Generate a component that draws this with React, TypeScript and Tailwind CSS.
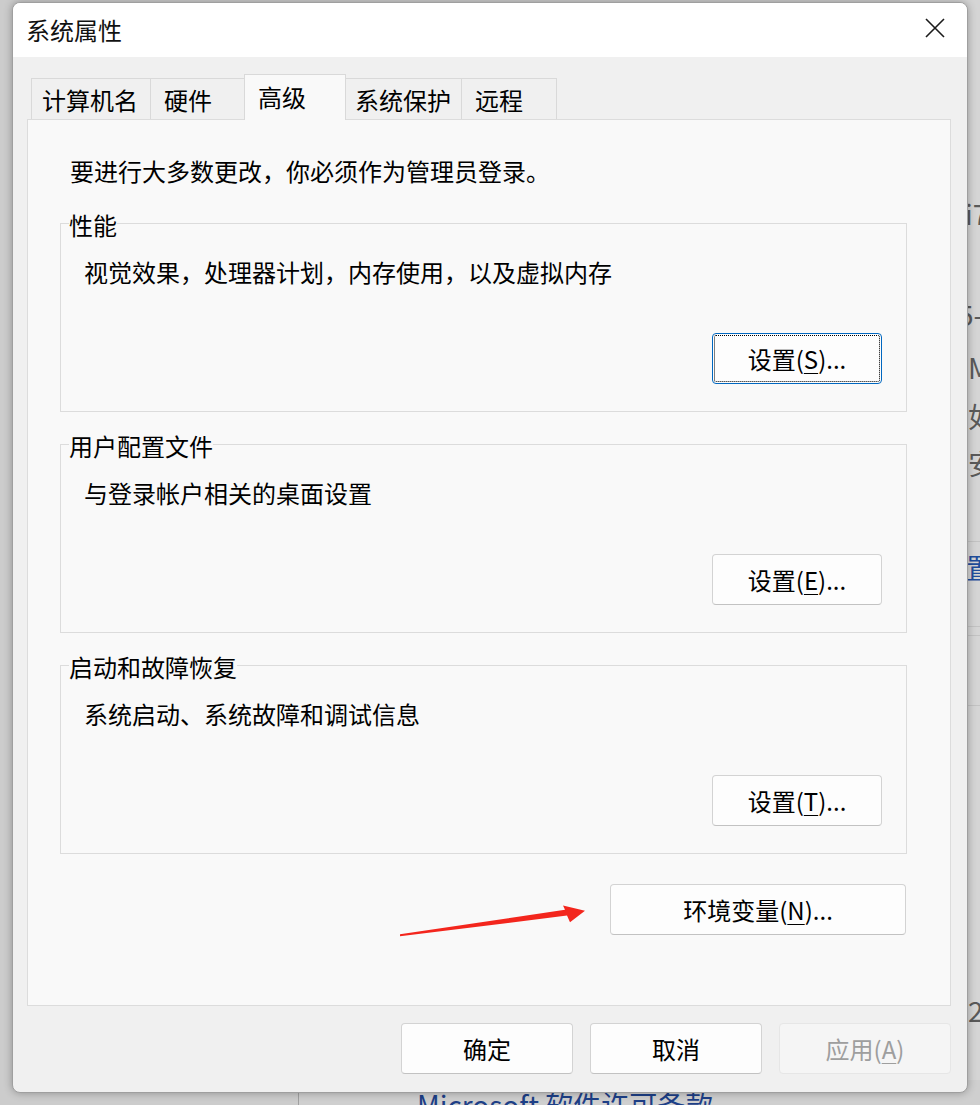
import React from "react";

function U({ children }: { children: React.ReactNode }) {
  return <span className="underline decoration-1 underline-offset-[4px]">{children}</span>;
}

function Btn({
  children,
  w,
  focused,
  disabled,
}: {
  children: React.ReactNode;
  w: string;
  focused?: boolean;
  disabled?: boolean;
}) {
  if (focused) {
    return (
      <div className={`relative flex h-[51px] items-center justify-center rounded-[4px] border border-[#0067c0] bg-[#fdfdfd] text-[24px] leading-[32px] text-black ${w}`}>
        <div className="absolute inset-[1px] rounded-[2px] border border-dotted border-black" />
        <span className="relative">{children}</span>
      </div>
    );
  }
  if (disabled) {
    return (
      <div className={`flex h-[51px] items-center justify-center rounded-[4px] border border-[#e6e6e6] bg-[#f5f5f5] text-[24px] leading-[32px] text-[#9e9e9e] ${w}`}>
        {children}
      </div>
    );
  }
  return (
    <div className={`flex h-[51px] items-center justify-center rounded-[4px] border border-[#d3d3d3] border-b-[#c2c2c2] bg-[#fdfdfd] text-[24px] leading-[32px] text-black ${w}`}>
      {children}
    </div>
  );
}

function Group({
  title,
  desc,
  button,
  className,
}: {
  title: string;
  desc: string;
  button: React.ReactNode;
  className?: string;
}) {
  return (
    <div className={`relative flex h-[189px] w-[847px] flex-col border border-[#dcdcdc] pl-[23px] pt-[32px] ${className ?? ""}`}>
      <span className="absolute -top-[15px] left-[8px] bg-[#f9f9f9] text-[24px] leading-[32px]">{title}</span>
      <div className="text-[24px] leading-[32px]">{desc}</div>
      <div className="mt-[45px] flex justify-end pr-[24px]">{button}</div>
    </div>
  );
}

export default function App() {
  return (
    <div className="relative h-[1105px] w-[980px] overflow-hidden bg-[#cccccc] font-['Noto_Sans_CJK_SC',sans-serif] text-black">
      {/* background window on the right */}
      <div className="absolute left-[900px] top-0 h-[1105px] w-[80px] bg-[#d5d5d5]" />
      <div className="absolute left-[900px] top-[541px] h-px w-[80px] bg-[#c3c3c3]" />
      <div className="absolute left-[900px] top-[626px] h-px w-[80px] bg-[#c3c3c3]" />
      <div className="absolute left-[900px] top-[635px] h-px w-[80px] bg-[#c3c3c3]" />
      <div className="absolute left-[900px] top-[705px] h-px w-[80px] bg-[#c3c3c3]" />
      <span className="absolute left-[965px] top-[199px] whitespace-nowrap text-[28px] leading-[28px] text-[#5a5a5a]">i7-8700</span>
      <span className="absolute left-[958px] top-[300px] whitespace-nowrap text-[28px] leading-[28px] text-[#5a5a5a]">5-</span>
      <span className="absolute left-[968px] top-[353px] whitespace-nowrap text-[28px] leading-[28px] text-[#5a5a5a]">Microsoft</span>
      <span className="absolute left-[968px] top-[402px] whitespace-nowrap text-[28px] leading-[28px] text-[#5a5a5a]">如</span>
      <span className="absolute left-[968px] top-[449px] whitespace-nowrap text-[28px] leading-[28px] text-[#5a5a5a]">安</span>
      <span className="absolute left-[966px] top-[553px] whitespace-nowrap text-[28px] leading-[28px] text-[#1f4e9c]">置</span>
      <span className="absolute left-[968px] top-[996px] whitespace-nowrap text-[28px] leading-[28px] text-[#5a5a5a]">2</span>

      {/* background window at the bottom */}
      <div className="absolute left-[298px] top-[1080px] h-[40px] w-[700px] border-l border-[#a0a0a0] bg-[#cfcfcf]" />
      <span className="absolute left-[417px] top-[1090px] whitespace-nowrap text-[28px] leading-[28px] text-[#1d3f87]">
        Microsoft 软件许可条款
      </span>

      {/* dialog window */}
      <div className="absolute left-[12px] top-[2px] flex h-[1091px] w-[956px] flex-col overflow-hidden rounded-[8px] border border-[#9f9f9f] bg-[#f0f0f0] shadow-[0_0_8px_rgba(0,0,0,0.3)]">
        {/* title bar */}
        <div className="flex h-[54px] shrink-0 items-center justify-between bg-white">
          <span className="ml-[13px] text-[24px] leading-[32px] text-[#111]">系统属性</span>
          <svg className="mr-[22px] -mt-[4px]" width="20" height="20" viewBox="0 0 20 20">
            <path d="M1 1 L19 19 M19 1 L1 19" stroke="#1b1b1b" strokeWidth="1.6" fill="none" />
          </svg>
        </div>

        {/* body */}
        <div className="flex flex-col pl-[14px] pt-[17px]">
          {/* tabs */}
          <div className="ml-[4px] flex h-[45px] items-end text-[24px] leading-[32px]">
            <div className="h-[41px] w-[119px] border-l border-t border-[#d9d9d9] bg-[#f0f0f0] pl-[10px] pt-[5px]">计算机名</div>
            <div className="h-[41px] w-[94px] border-l border-t border-[#d9d9d9] bg-[#f0f0f0] pl-[13px] pt-[5px]">硬件</div>
            <div className="relative z-10 -mb-px h-[46px] w-[102px] border-l border-r border-t border-[#d9d9d9] bg-[#f9f9f9] pl-[13px] pt-[6px]">高级</div>
            <div className="h-[41px] w-[115px] border-t border-[#d9d9d9] bg-[#f0f0f0] pl-[9px] pt-[5px]">系统保护</div>
            <div className="h-[41px] w-[96px] border-l border-r border-t border-[#d9d9d9] bg-[#f0f0f0] pl-[13px] pt-[5px]">远程</div>
          </div>

          {/* panel */}
          <div className="flex h-[887px] w-[924px] flex-col border border-[#dcdcdc] bg-[#f9f9f9] pl-[32px] pt-[35px]">
            <div className="ml-[10px] text-[24px] leading-[32px]">要进行大多数更改，你必须作为管理员登录。</div>

            <Group
              className="mt-[36px]"
              title="性能"
              desc="视觉效果，处理器计划，内存使用，以及虚拟内存"
              button={
                <Btn w="w-[170px]" focused>
                  设置(<U>S</U>)...
                </Btn>
              }
            />
            <Group
              className="mt-[32px]"
              title="用户配置文件"
              desc="与登录帐户相关的桌面设置"
              button={
                <Btn w="w-[170px]">
                  设置(<U>E</U>)...
                </Btn>
              }
            />
            <Group
              className="mt-[32px]"
              title="启动和故障恢复"
              desc="系统启动、系统故障和调试信息"
              button={
                <Btn w="w-[170px]">
                  设置(<U>T</U>)...
                </Btn>
              }
            />

            <div className="ml-[550px] mt-[30px]">
              <Btn w="w-[296px]">
                环境变量(<U>N</U>)...
              </Btn>
            </div>
          </div>

          {/* bottom buttons */}
          <div className="mt-[17px] flex w-[924px] justify-end gap-[17px]">
            <Btn w="w-[172px]">确定</Btn>
            <Btn w="w-[172px]">取消</Btn>
            <Btn w="w-[172px]" disabled>
              应用(<U>A</U>)
            </Btn>
          </div>
        </div>
      </div>

      {/* red annotation arrow */}
      <svg className="absolute left-[395px] top-[900px]" width="195" height="40" viewBox="395 900 195 40">
        <polygon
          points="400,934.2 565,909.8 563,905.6 585,910.8 570,922.2 567,915.6 400,936.2"
          fill="#f3261d"
        />
      </svg>
    </div>
  );
}
